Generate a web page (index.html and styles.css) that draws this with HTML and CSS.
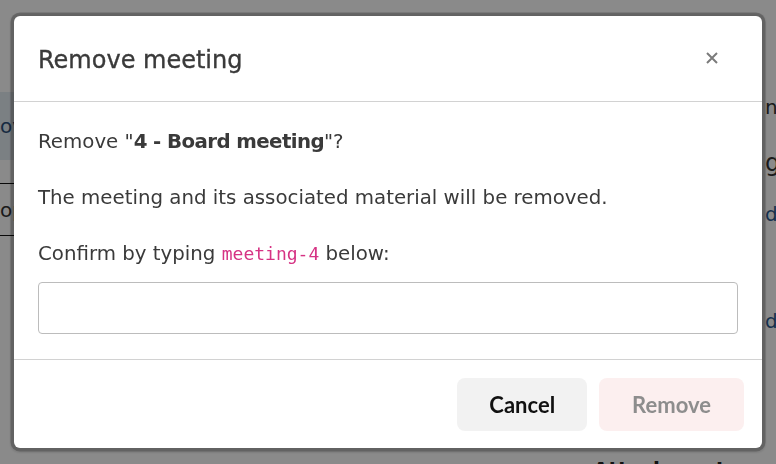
FILE: index.html
```html
<!DOCTYPE html>
<html lang="en">
<head>
<meta charset="utf-8">
<title>Remove meeting</title>
<link rel="stylesheet" href="styles.css">
</head>
<body>
<div class="page">
  <div class="left-col">
    <div class="row row-hl">overview</div>
    <div class="row-spacer"></div>
    <div class="row row-plain">open</div>
  </div>
  <div class="right-col">
    <div class="info-row info-1"><span class="lbl">Location</span><span class="val">name</span></div>
    <div class="info-row info-2"><span class="lbl">Group</span><span class="val val-big">group</span></div>
    <div class="info-row info-3"><span class="lbl">Agenda</span><span class="val val-link">download</span></div>
    <div class="info-row info-4"><span class="lbl">Minutes</span><span class="val val-link">download</span></div>
    <h2 class="attach">Attachments</h2>
  </div>
</div>

<div class="backdrop"></div>

<div class="modal" role="dialog" aria-labelledby="modal-title">
  <div class="modal-header">
    <h1 class="modal-title" id="modal-title">Remove meeting</h1>
    <button class="close-btn" aria-label="Close">
      <svg width="12" height="12" viewBox="0 0 12 12"><path d="M1 1L11 11M11 1L1 11" stroke="#7b7b7b" stroke-width="2" stroke-linecap="butt"/></svg>
    </button>
  </div>
  <div class="modal-body">
    <p class="para">Remove "<strong class="strong">4 - Board meeting</strong>"?</p>
    <p class="para">The meeting and its associated material will be removed.</p>
    <p class="para para-label">Confirm by typing <code class="code">meeting-4</code> below:</p>
    <input class="confirm-input" type="text" aria-label="Confirm">
  </div>
  <div class="modal-footer">
    <button class="btn btn-cancel">Cancel</button>
    <button class="btn btn-remove" disabled>Remove</button>
  </div>
</div>
</body>
</html>
```

FILE: styles.css
```css
html, body {
  margin: 0;
  padding: 0;
  background: #ffffff;
  overflow: hidden;
}

body {
  font-family: "DejaVu Sans", sans-serif;
  width: 776px;
  height: 464px;
}

/* Background page */
.page {
  display: grid;
  grid-template-columns: 577px 1fr;
  height: 464px;
  color: #222;
}

.left-col {
  padding-top: 92px;
}

.row {
  display: flex;
  align-items: center;
  font-size: 20px;
}

.row-hl {
  height: 68px;
  background: #e4ecf3;
  color: #2c4f78;
}

.row-spacer {
  height: 23px;
  border-bottom: 1px solid #111;
}

.row-plain {
  height: 51px;
  border-bottom: 1px solid #111;
  color: #333;
}

.right-col {
  display: flex;
  flex-direction: column;
  padding-left: 16px;
  overflow: hidden;
}

.info-row {
  display: grid;
  grid-template-columns: 172px 1fr;
  line-height: 24px;
  font-size: 20px;
  color: #333;
  white-space: nowrap;
}

.info-1 { margin-top: 95px; }
.info-2 { margin-top: 32px; }
.info-3 { margin-top: 27px; }
.info-4 { margin-top: 83px; }

.val-big { font-size: 24px; }
.val-link { color: #2a5a8f; }

.attach {
  margin: 124px 0 0 0;
  font-size: 20px;
  line-height: 24px;
  font-weight: bold;
  color: #222;
  white-space: nowrap;
}

/* Overlay */
.backdrop {
  position: fixed;
  inset: 0;
  background: rgba(0, 0, 0, 0.46);
}

.modal {
  position: fixed;
  left: 14px;
  top: 16px;
  width: 748px;
  background: #ffffff;
  border-radius: 6px;
  box-shadow: 0 0 0 3.5px rgba(0, 0, 0, 0.21), 0 1px 2px 3.5px rgba(0, 0, 0, 0.1);
  color: #3a3a3a;
}

.modal-header {
  display: flex;
  align-items: center;
  justify-content: space-between;
  padding: 26px 24px 23px 24px;
  border-bottom: 1px solid #d2d2d2;
}

.modal-title {
  margin: 0;
  font-size: 24px;
  line-height: 36px;
  font-weight: normal;
  color: #3a3a3a;
  -webkit-text-stroke: 0.35px #3a3a3a;
}

.close-btn {
  width: 32px;
  height: 32px;
  border: 0;
  padding: 0;
  background: transparent;
  display: flex;
  align-items: center;
  justify-content: center;
  margin: -5px 10px 0 0;
}

.modal-body {
  padding: 25px 24px 25px 24px;
  border-bottom: 1px solid #d2d2d2;
}

.para {
  margin: 0 0 26px 0;
  font-size: 19.8px;
  line-height: 30px;
}

.para-label {
  margin-bottom: 13px;
}

.strong {
  font-weight: bold;
  letter-spacing: -0.6px;
}

.code {
  font-family: "DejaVu Sans Mono", monospace;
  font-size: 18px;
  color: #d63384;
}

.confirm-input {
  display: block;
  box-sizing: border-box;
  width: 100%;
  height: 52px;
  margin: 0;
  border: 1px solid #bcbcbc;
  border-radius: 4px;
  background: #fff;
  outline: none;
}

.modal-footer {
  display: flex;
  justify-content: flex-end;
  gap: 12px;
  padding: 18px 18px 17px 18px;
}

.btn {
  height: 53px;
  border: 0;
  border-radius: 8px;
  padding: 0 32px;
  font-family: "Lato", sans-serif;
  font-size: 22px;
  font-weight: bold;
}

.btn-cancel {
  background: #f2f2f2;
  color: #111;
}

.btn-remove {
  background: #fcefef;
  color: #8d8d8d;
  padding: 0 33px;
}
```
